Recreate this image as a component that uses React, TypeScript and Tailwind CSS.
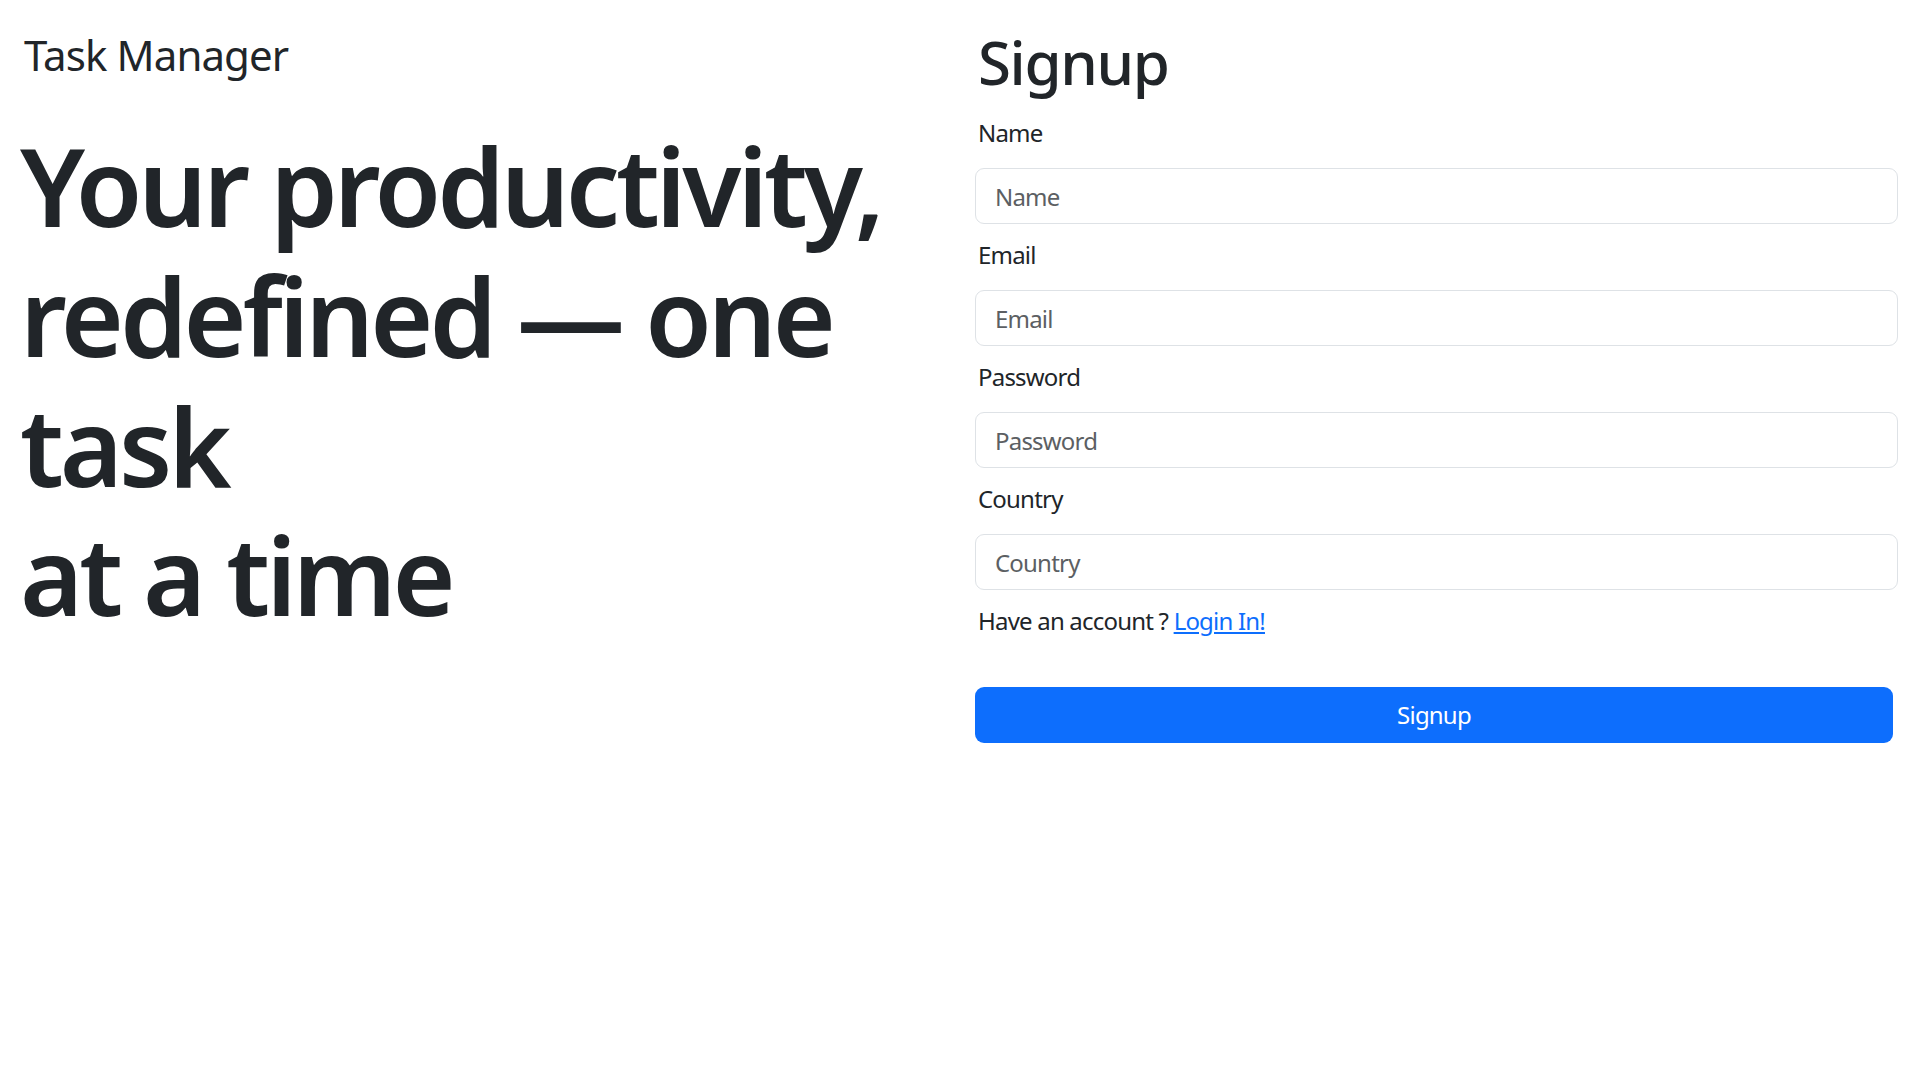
export default function App() {
  const fields = ['Name', 'Email', 'Password', 'Country']

  return (
    <div className="min-h-screen bg-white text-[#212529] font-['Noto_Sans',sans-serif]">
      <div className="flex">
        {/* Left: brand + tagline */}
        <div className="w-[960px] pl-[20px] pt-[30px]">
          <div className="pl-[4px] text-[42px] leading-[50.4px] font-normal tracking-[-0.9px]">Task Manager</div>
          <h1 className="mt-[41px] text-[108px] leading-[129.6px] font-semibold tracking-[-4px]">
            Your productivity,
            <br />
            redefined — one
            <br />
            task
            <br />
            at a time
          </h1>
        </div>

        {/* Right: signup form */}
        <div className="w-[923px] ml-[15px] pt-[26px]">
          <h2 className="pl-[3px] text-[60px] leading-[72px] font-medium tracking-[-1.4px] mb-[17px]">Signup</h2>
          <form className="tracking-[-0.8px]">
            {fields.map((f) => (
              <div key={f} className="mb-[13px]">
                <label className="block pl-[3px] text-[24px] leading-[36px] mb-[17px]">{f}</label>
                <input
                  type={f === 'Password' ? 'password' : f === 'Email' ? 'email' : 'text'}
                  placeholder={f}
                  className="block w-full h-[56px] px-[19px] text-[24px] tracking-[-0.8px] border border-[#dee2e6] rounded-[9px] placeholder:text-[#5c5f63] outline-none"
                />
              </div>
            ))}
            <p className="pl-[3px] text-[24px] leading-[36px]">
              Have an account ?{' '}
              <a href="#" className="text-[#0d6efd] underline">
                Login In!
              </a>
            </p>
            <button
              type="button"
              className="mt-[48px] w-[918px] h-[56px] bg-[#0d6efd] text-white text-[24px] tracking-[-0.8px] rounded-[9px]"
            >
              Signup
            </button>
          </form>
        </div>
      </div>
    </div>
  )
}
